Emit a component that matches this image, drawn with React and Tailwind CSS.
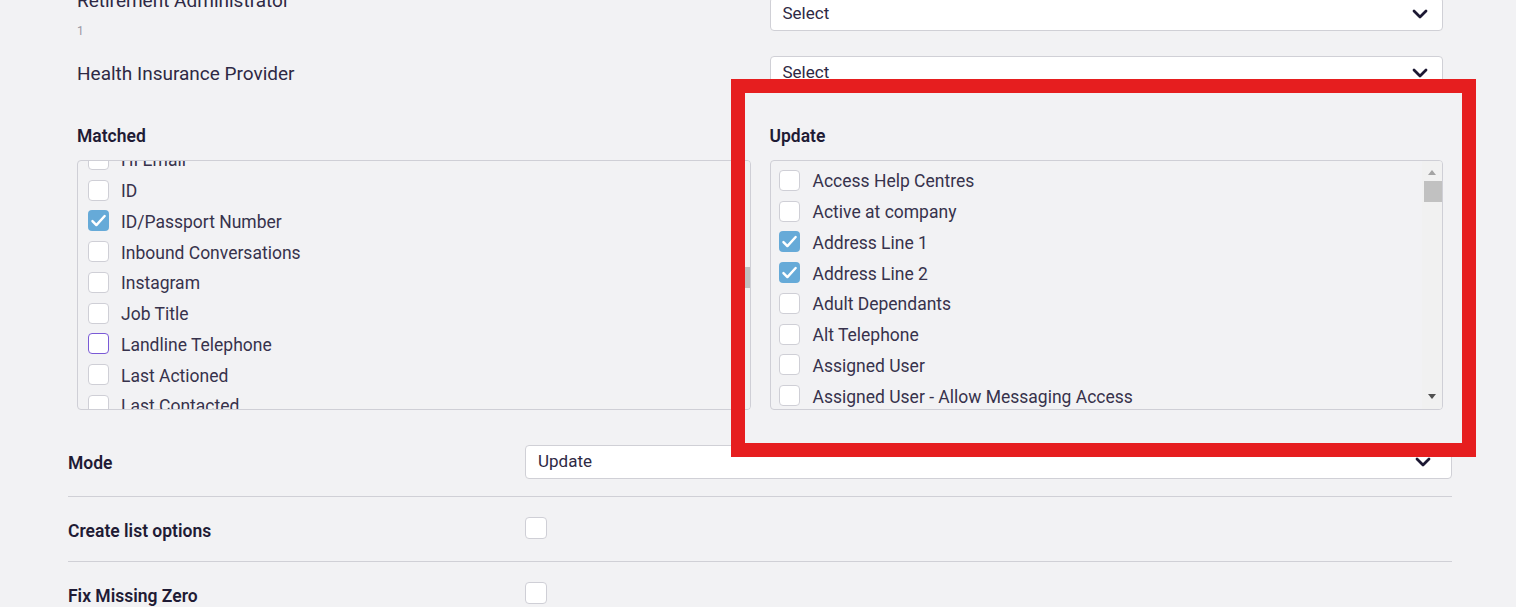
import React from 'react';

const matched = [
  { label: 'HI Email' },
  { label: 'ID' },
  { label: 'ID/Passport Number', checked: true },
  { label: 'Inbound Conversations' },
  { label: 'Instagram' },
  { label: 'Job Title' },
  { label: 'Landline Telephone', focused: true },
  { label: 'Last Actioned' },
  { label: 'Last Contacted' },
];

const update = [
  { label: 'Access Help Centres' },
  { label: 'Active at company' },
  { label: 'Address Line 1', checked: true },
  { label: 'Address Line 2', checked: true },
  { label: 'Adult Dependants' },
  { label: 'Alt Telephone' },
  { label: 'Assigned User' },
  { label: 'Assigned User - Allow Messaging Access' },
  { label: 'Assigned User Email' },
];

function Chevron({ className }) {
  return (
    <svg className={className} width="16" height="10" viewBox="0 0 16 10" fill="none">
      <path d="M2 2l6 6 6-6" stroke="#1c1833" strokeWidth="2.8" strokeLinecap="round" strokeLinejoin="round" />
    </svg>
  );
}

function Box({ checked, focused }) {
  if (checked) {
    return (
      <span className="flex h-[21px] w-[21px] shrink-0 items-center justify-center rounded-[4px] bg-[#66aad8]">
        <svg width="17" height="17" viewBox="0 0 16 16" fill="none">
          <path d="M2.3 8.6l3.7 3.7L13.8 3.8" stroke="white" strokeWidth="2.3" strokeLinecap="round" strokeLinejoin="round" />
        </svg>
      </span>
    );
  }
  return (
    <span
      className={
        'block h-[21px] w-[21px] shrink-0 rounded-[4px] border bg-white ' +
        (focused ? 'border-[#7a5ad6]' : 'border-[#cfcfd6]')
      }
    />
  );
}

function Select({ value, chevronRight = 'pr-[14px]', className = '' }) {
  return (
    <div className={'flex h-[34px] items-center justify-between rounded-[4px] border border-[#d0d0d6] bg-white pl-[12px] ' + chevronRight + ' ' + className}>
      <span className="text-[17px] text-[#2e2944]">{value}</span>
      <Chevron />
    </div>
  );
}

function Scrollbar({ thumbTop, dark }) {
  return (
    <div className="flex w-[20px] shrink-0 flex-col items-center bg-[#f1f1f1] pt-[9px]">
      <span className="h-0 w-0 border-x-[4.5px] border-b-[5px] border-x-transparent border-b-[#a3a3a3]" />
      <div className="relative w-full flex-1">
        <div className="absolute left-[2px] right-0 h-[21px] bg-[#c1c1c1]" style={{ top: thumbTop }} />
      </div>
      <span className={'mb-[10px] h-0 w-0 border-x-[4.5px] border-t-[5px] border-x-transparent ' + (dark ? 'border-t-[#505050]' : 'border-t-[#a3a3a3]')} />
    </div>
  );
}

function CheckList({ items, offset, padLeft, thumbTop, dark }) {
  return (
    <div className="flex h-[250px] overflow-hidden rounded-[4px] border border-[#cfcfd6] bg-[#f2f2f4]">
      <div className="flex-1 overflow-hidden">
        <div className={offset}>
          {items.map((it) => (
            <div key={it.label} className={'flex h-[30.75px] items-center ' + padLeft}>
              <Box checked={it.checked} focused={it.focused} />
              <span className="whitespace-nowrap pt-[2px] text-[17.5px] text-[#37324c]">{it.label}</span>
            </div>
          ))}
        </div>
      </div>
      <Scrollbar thumbTop={thumbTop} dark={dark} />
    </div>
  );
}

export default function App() {
  return (
    <div className="relative h-[607px] overflow-hidden bg-[#f2f2f4] font-['Roboto',sans-serif]">
      <div className="-mt-[3px] pl-[77px] pr-[73px]">
        {/* Row: Retirement Administrator */}
        <div className="grid h-[34px] grid-cols-2 gap-x-[19px]">
          <div>
            <div className="-mt-[8px] text-[19px] leading-[24px] text-[#2e2944]">Retirement Administrator</div>
            <div className="mt-[10px] text-[12px] leading-[16px] text-[#9a98a4]">1</div>
          </div>
          <Select value="Select" chevronRight="pr-[14px]" />
        </div>

        {/* Row: Health Insurance Provider */}
        <div className="mt-[25px] grid h-[34px] grid-cols-2 items-center gap-x-[19px]">
          <div className="pt-[1px] text-[19px] leading-[24px] text-[#2e2944]">Health Insurance Provider</div>
          <Select value="Select" chevronRight="pr-[14px]" />
        </div>

        <div className="mt-[34px] grid grid-cols-2 gap-x-[19px]">
          <div className="text-[17.5px] font-semibold leading-[24px] text-[#1f1b35]">Matched</div>
          <div className="text-[17.5px] font-semibold leading-[24px] text-[#1f1b35]">Update</div>
        </div>

        <div className="mt-[12px] grid grid-cols-2 gap-x-[19px]">
          <CheckList items={matched} offset="-mt-[17px]" padLeft="gap-[12px] pl-[10px]" thumbTop={92} />
          <CheckList items={update} offset="mt-[4px]" padLeft="gap-[13px] pl-[8px]" thumbTop={6} dark />
        </div>
      </div>

      <div className="mt-[35px] pl-[68px] pr-[64px]">
        <div className="flex h-[34px] items-center">
          <div className="w-[457px] pt-[3px] text-[17.5px] font-semibold text-[#1f1b35]">Mode</div>
          <Select value="Update" chevronRight="pr-[20px]" className="flex-1" />
        </div>
        <div className="mt-[17px] h-px bg-[#d0d0d6]" />
        <div className="flex h-[64px] items-center">
          <div className="w-[457px] pt-[5px] text-[17.5px] font-semibold text-[#1f1b35]">Create list options</div>
          <span className="-mt-[2px] block h-[22px] w-[22px] rounded-[4px] border border-[#cfcfd6] bg-white" />
        </div>
        <div className="h-px bg-[#d0d0d6]" />
        <div className="flex h-[64px] items-center">
          <div className="w-[457px] pt-[5px] text-[17.5px] font-semibold text-[#1f1b35]">Fix Missing Zero</div>
          <span className="-mt-[2px] block h-[22px] w-[22px] rounded-[4px] border border-[#cfcfd6] bg-white" />
        </div>
      </div>

      {/* annotation highlight */}
      <div className="pointer-events-none absolute left-[731px] top-[79px] h-[378px] w-[745px] border-[14px] border-[#e61e1f]" />
    </div>
  );
}
